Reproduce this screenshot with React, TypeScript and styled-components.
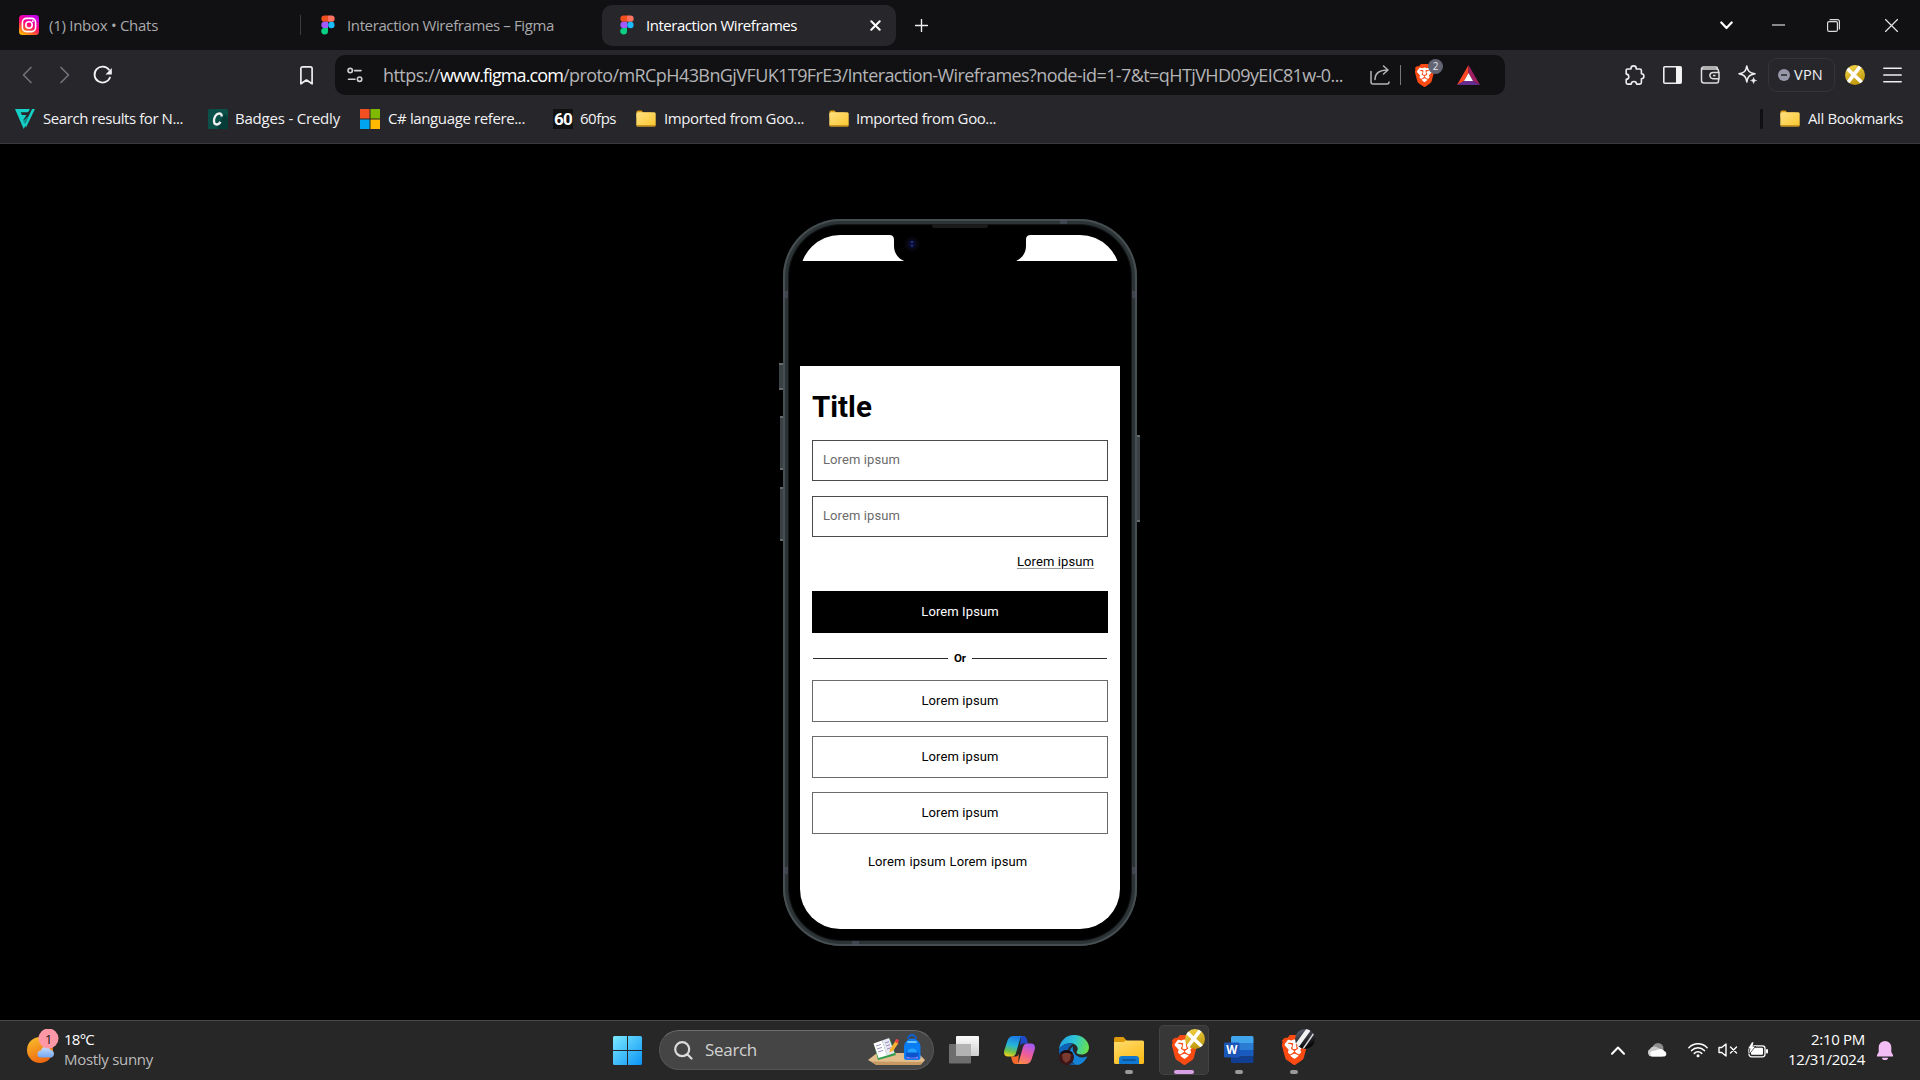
import React, { useLayoutEffect, useRef, useState } from 'react';
import styled, { createGlobalStyle, css } from 'styled-components';
import { SiBrave } from 'react-icons/si';

const GlobalStyle = createGlobalStyle`
  *, *::before, *::after { box-sizing: border-box; }
  body { margin: 0; background: #000; overflow: hidden; }
  svg { display: block; flex: none; }
`;

/* ---------- text that keeps a fixed measure ---------- */

const TextSpan = styled.span<{ $size: number; $color: string; $weight?: number; $family?: string }>`
  display: inline-block;
  flex: none;
  white-space: pre;
  font-family: ${p => p.$family ?? "'Open Sans'"}, 'Noto Sans', sans-serif;
  font-size: ${p => p.$size}px;
  font-weight: ${p => p.$weight ?? 400};
  line-height: 20px;
  color: ${p => p.$color};
`;

type LabelProps = {
  width: number;
  size?: number;
  color?: string;
  weight?: number;
  family?: string;
  children: React.ReactNode;
};

function Label({ width, size = 15, color = '#f2f2f4', weight, family, children }: LabelProps) {
  const ref = useRef<HTMLSpanElement>(null);
  const [spacing, setSpacing] = useState(0);
  useLayoutEffect(() => {
    const el = ref.current;
    if (!el) return;
    const count = (el.textContent ?? '').length;
    setSpacing((width - el.getBoundingClientRect().width) / Math.max(count, 1));
  }, [width]);
  return (
    <TextSpan ref={ref} $size={size} $color={color} $weight={weight} $family={family} style={{ letterSpacing: `${spacing}px` }}>
      {children}
    </TextSpan>
  );
}

/* ---------- shell ---------- */

const Desktop = styled.div`
  width: 1920px;
  height: 1080px;
  display: flex;
  flex-direction: column;
  background: #000;
  overflow: hidden;
`;

/* ---------- tab strip ---------- */

const TabStrip = styled.header`
  height: 50px;
  display: flex;
  align-items: center;
  background: #111113;
  flex: none;
`;

const Tab = styled.div<{ $width: number; $active?: boolean; $pad: number; $gap: number }>`
  width: ${p => p.$width}px;
  height: 41px;
  display: flex;
  align-items: center;
  gap: ${p => p.$gap}px;
  padding: 0 15px 0 ${p => p.$pad}px;
  border-radius: 10px;
  background: ${p => (p.$active ? '#27262b' : 'transparent')};
`;

const TabDivider = styled.i`
  width: 1px;
  height: 20px;
  background: #3d3c42;
`;

const Spacer = styled.div`
  flex: 1;
`;

const NewTab = styled.div`
  padding-left: 19px;
`;

const WindowControls = styled.div`
  display: grid;
  grid-template-columns: 52px 55px 58px 13px;
  align-items: center;
  padding-right: 22px;
`;

/* ---------- toolbar ---------- */

const Toolbar = styled.nav`
  height: 50px;
  display: flex;
  align-items: center;
  background: #27262b;
  flex: none;
`;

const NavButtons = styled.div`
  width: 300px;
  padding-left: 21px;
  display: grid;
  grid-template-columns: 38px 34px 20px;
  align-items: center;
`;

const AddressBar = styled.div`
  width: 1170px;
  height: 40px;
  margin-left: 22px;
  padding: 0 25px 0 12px;
  display: flex;
  align-items: center;
  border-radius: 10px;
  background: #111113;
`;

const Url = styled.div`
  margin-left: 20px;
  width: 987px;
  display: flex;
`;

const BarDivider = styled.i`
  width: 1px;
  height: 20px;
  margin: 0 14px 0 10px;
  background: #77767c;
`;

const ShieldButton = styled.div`
  position: relative;
  width: 42px;
`;

const CountBadge = styled.span`
  position: absolute;
  left: 13px;
  top: -5px;
  width: 15px;
  height: 15px;
  border-radius: 50%;
  background: #636474;
  color: #e6e6ea;
  font: 10px/15px 'Open Sans', sans-serif;
  text-align: center;
`;

const Actions = styled.div`
  display: flex;
  align-items: center;
  margin-left: 120px;
  gap: 18px;
`;

const VpnButton = styled.div`
  width: 67px;
  height: 34px;
  margin: 0 -8px;
  display: flex;
  align-items: center;
  gap: 4px;
  padding-left: 9px;
  border: 1px solid #35343a;
  border-radius: 9px;
`;

/* ---------- bookmarks ---------- */

const Bookmarks = styled.nav`
  height: 44px;
  display: flex;
  align-items: center;
  padding: 0 17px 6px 15px;
  background: #27262b;
  border-bottom: 1px solid #3a393f;
  flex: none;
`;

const Bookmark = styled.div<{ $after?: number; $gap?: number }>`
  display: flex;
  align-items: center;
  gap: ${p => p.$gap ?? 8}px;
  margin-right: ${p => p.$after ?? 0}px;
  ${TextSpan} { padding-bottom: 2px; }
`;

const BookmarkDivider = styled.i`
  width: 3px;
  height: 20px;
  margin-right: 17px;
  border-radius: 1px;
  background: #101013;
`;

const SixtyIcon = styled.div`
  width: 20px;
  height: 20px;
  background: #111;
  color: #fff;
  font: 700 17px/20px Roboto, sans-serif;
  letter-spacing: -0.8px;
  text-align: center;
`;

/* ---------- phone ---------- */

const Stage = styled.main`
  height: 876px;
  display: flex;
  justify-content: center;
  align-items: flex-start;
  padding-top: 75px;
  background: #000;
  flex: none;
`;

const Phone = styled.div`
  position: relative;
  width: 354px;
  height: 727px;
  padding: 16px 17px 17px;
  border-radius: 58px;
  background: #000;
  box-shadow: inset 0 0 0 2px #464e51, inset 0 0 0 5px #2c3336, inset 0 0 1px 6px #15191a;
`;

const SideKey = styled.i<{ $top: number; $height: number; $right?: boolean; $wide?: boolean }>`
  position: absolute;
  top: ${p => p.$top}px;
  height: ${p => p.$height}px;
  width: ${p => (p.$wide ? 4 : 3)}px;
  ${p => (p.$right ? css`right: -3px;` : css`left: ${p.$wide ? -4 : -3}px;`)}
  background: #3a4144;
  border-top: 2px solid #646b6d;
  border-bottom: 2px solid #646b6d;
`;

const Antenna = styled.i<{ $x: number; $y: number; $flat?: boolean }>`
  position: absolute;
  left: ${p => p.$x}px;
  top: ${p => p.$y}px;
  width: ${p => (p.$flat ? 7 : 5)}px;
  height: ${p => (p.$flat ? 5 : 7)}px;
  background: rgba(80, 82, 96, 0.6);
`;

const Screen = styled.div`
  width: 320px;
  height: 694px;
  display: flex;
  flex-direction: column;
  padding-top: 131px;
  border-radius: 40px;
  background: linear-gradient(#fff 26px, #000 26px, #000 131px, #fff 131px);
  overflow: hidden;
`;

const Notch = styled.svg`
  position: absolute;
  left: 104px;
  top: 0;
`;

const Form = styled.div`
  display: flex;
  flex-direction: column;
  padding: 23px 12px 0 12px;
`;

const Title = styled.h1`
  margin: 0;
  height: 50.5px;
  font: 700 29.5px/36px Roboto, sans-serif;
  color: #000;
`;

const fieldText = css`
  font: 400 13px/20px Roboto, sans-serif;
  letter-spacing: 0.1px;
`;

const Field = styled.div`
  ${fieldText}
  height: 41.5px;
  margin-bottom: 14.5px;
  padding: 9.5px 10px;
  border: 1px solid #4a4a4a;
  color: #6b6b6b;
`;

const ForgotLink = styled.a`
  ${fieldText}
  align-self: flex-end;
  margin: 0.5px 14px 19px 0;
  color: #000;
  text-decoration: underline;
  text-decoration-color: #999;
  text-underline-offset: 2px;
`;

const Button = styled.button<{ $primary?: boolean }>`
  ${fieldText}
  height: 41.5px;
  margin: 0 0 14.5px;
  padding: 0;
  border: 1px solid ${p => (p.$primary ? '#000' : '#6a6a6a')};
  background: ${p => (p.$primary ? '#000' : '#fff')};
  color: ${p => (p.$primary ? '#fff' : '#000')};
`;

const OrRow = styled.div`
  height: 20px;
  margin: 1px 1px 12px;
  display: flex;
  align-items: center;
  gap: 6px;
  font: 700 11.5px/20px Roboto, sans-serif;
  color: #000;
  &::before, &::after { content: ''; flex: 1; height: 1px; background: #2b2b2b; }
`;

const SignUp = styled.p`
  ${fieldText}
  margin: 4px 0 0 56px;
  color: #000;
  word-spacing: 0.6px;
`;

/* ---------- taskbar ---------- */

const Taskbar = styled.footer`
  height: 60px;
  display: flex;
  align-items: center;
  padding-bottom: 1px;
  background: #272727;
  border-top: 1px solid #484848;
  flex: none;
`;

const Weather = styled.div`
  width: 613px;
  display: flex;
  padding-left: 26px;
  gap: 3px;
`;

const Stack = styled.div<{ $end?: boolean }>`
  display: flex;
  flex-direction: column;
  align-items: ${p => (p.$end ? 'flex-end' : 'flex-start')};
  padding-bottom: 3px;
`;

const SearchBox = styled.div`
  width: 275px;
  height: 40px;
  margin: 0 15px 0 17px;
  padding: 0 8px 0 14px;
  display: flex;
  align-items: center;
  gap: 12px;
  border-radius: 20px;
  border: 1px solid #555;
  border-top-color: #6c6c6c;
  background: #454545;
`;

const Apps = styled.div`
  display: flex;
  align-items: center;
  gap: 5px;
  margin-left: -10px;
`;

const AppButton = styled.div<{ $state?: 'active' | 'open' }>`
  position: relative;
  width: 50px;
  height: 50px;
  display: grid;
  place-items: center;
  border-radius: 5px;
  ${p => p.$state === 'active' && css`background: #373737; box-shadow: inset 0 0 0 1px #434343;`}
  ${p => p.$state && css`
    &::after {
      content: '';
      position: absolute;
      bottom: 1px;
      left: ${p.$state === 'active' ? 15 : 21}px;
      width: ${p.$state === 'active' ? 20 : 8}px;
      height: 4px;
      border-radius: 2px;
      background: ${p.$state === 'active' ? '#d9a0e6' : '#9a9a9a'};
    }
  `}
`;

const Tray = styled.div`
  display: flex;
  align-items: center;
  padding-right: 27px;
`;

const TraySlot = styled.div<{ $after: number }>`
  margin-right: ${p => p.$after}px;
`;

/* ---------- icons ---------- */

const FigmaIcon = () => (
  <svg width="14" height="20" viewBox="0 0 14 20">
    <path d="M3.5 .5H7v6.3H3.5a3.15 3.15 0 0 1 0-6.3z" fill="#f24e1e" />
    <path d="M7 .5h3.5a3.15 3.15 0 0 1 0 6.3H7z" fill="#ff7262" />
    <path d="M3.5 6.8H7v6.3H3.5a3.15 3.15 0 0 1 0-6.3z" fill="#a259ff" />
    <circle cx="10.4" cy="9.95" r="3.2" fill="#1abcfe" />
    <path d="M3.5 13.1H7v3.2a3.4 3.2 0 1 1-3.5-3.2z" fill="#0acf83" />
  </svg>
);

const InstagramIcon = () => (
  <svg width="20" height="20" viewBox="0 0 20 20">
    <defs>
      <linearGradient id="ig" x1="0.1" y1="1" x2="0.6" y2="0">
        <stop offset="0" stopColor="#ffc800" />
        <stop offset=".3" stopColor="#ff5a2c" />
        <stop offset=".6" stopColor="#ff0080" />
        <stop offset="1" stopColor="#c800e8" />
      </linearGradient>
    </defs>
    <rect width="20" height="20" rx="3.5" fill="url(#ig)" />
    <g fill="none" stroke="#fff" strokeWidth="1.6">
      <rect x="3.4" y="3.4" width="13.2" height="13.2" rx="4" />
      <circle cx="10" cy="10" r="3.2" />
    </g>
    <circle cx="13.8" cy="6.2" r=".9" fill="#fff" />
  </svg>
);

const FolderIcon = () => (
  <svg width="20" height="17" viewBox="0 0 20 17">
    <defs>
      <linearGradient id="fold" x1="0" y1="0" x2="1" y2="1">
        <stop offset="0" stopColor="#ffe183" />
        <stop offset="1" stopColor="#fbc62f" />
      </linearGradient>
    </defs>
    <path d="M.5 2a1.6 1.6 0 0 1 1.6-1.6h3.4L7.300 2.500h8v5H.5z" fill="#dfa011" />
    <rect x=".3" y="2.300" width="19.400" height="13.800" rx="1.500" fill="url(#fold)" />
    <path d="M.4 15h19.2v.2a1.5 1.500 0 0 1-1.500 1.500H1.900A1.500 1.500 0 0 1 .4 15.200z" fill="#c99522" />
  </svg>
);

const BraveIcon = ({ w, h }: { w: number; h: number }) => (
  <svg width={w} height={h} viewBox="2 0 20 24" preserveAspectRatio="none">
    <path d="M6.500 3h11l3 5-3.500 12H7L3.500 8z" fill="#fff" />
    <SiBrave x="0" y="0" size="24" color="#fb4a12" />
  </svg>
);

const PuzzleIcon = () => (
  <svg width="20" height="20" viewBox="0 0 20 20" fill="none" stroke="#eee" strokeWidth="1.600" strokeLinejoin="round">
    <path d="M1.200 5.200a1.200 1.200 0 0 1 1.200-1.200H6V3.300a2.600 2.400 0 0 1 5.200 0V4h3.600a1.600 1.600 0 0 1 1.600 1.600v3.200a2.500 2.500 0 0 1 0 5v3.700a1.600 1.600 0 0 1-1.600 1.600h-3.300a2.600 2.600 0 0 0-5.200 0H2.500a1.300 1.300 0 0 1-1.300-1.300v-3.500a2.600 2.600 0 0 0 0-5.200z" />
  </svg>
);

const StripedAvatar = ({ kind, size }: { kind: 'gold' | 'dark'; size: number }) => (
  <svg width={size} height={size} viewBox="0 0 20 20">
    <defs>
      <clipPath id={`av-${kind}`}><circle cx="10" cy="10" r="10" /></clipPath>
      <linearGradient id={`avg-${kind}`} x1="0" y1="0" x2=".4" y2="1">
        <stop offset="0" stopColor={kind === 'gold' ? '#f6d94b' : '#65697a'} />
        <stop offset="1" stopColor={kind === 'gold' ? '#c29a10' : '#050506'} />
      </linearGradient>
    </defs>
    <g clipPath={`url(#av-${kind})`}>
      <rect width="20" height="20" fill={`url(#avg-${kind})`} />
      {kind === 'gold' ? (
        <path d="M2 3.500 17 17.500M15.500 1 2.500 18" stroke="#fff" strokeWidth="3.600" />
      ) : (
        <>
          <path d="M14 0 1 18" stroke="#f3f3f3" strokeWidth="4.500" />
          <path d="M19 4 8 20" stroke="#d8d8d8" strokeWidth="1.500" />
        </>
      )}
    </g>
  </svg>
);

const Overlay = styled.div<{ $x: number; $y: number }>`
  position: absolute;
  left: ${p => p.$x}px;
  top: ${p => p.$y}px;
`;

const Line = ({ w, h, d, c = '#eee', s = 1.5, box }: { w: number; h: number; d: string; c?: string; s?: number; box?: string }) => (
  <svg width={w} height={h} viewBox={box ?? `0 0 ${w} ${h}`} fill="none" stroke={c} strokeWidth={s} strokeLinecap="round" strokeLinejoin="round">
    <path d={d} />
  </svg>
);

const WeatherIcon = () => (
  <svg width="35" height="40" viewBox="0 1 35 40">
    <defs>
      <linearGradient id="sun" x1=".2" y1="0" x2=".6" y2="1">
        <stop offset="0" stopColor="#f8bc2c" />
        <stop offset="1" stopColor="#ee650e" />
      </linearGradient>
      <linearGradient id="cl" x1="0" y1="0" x2="0" y2="1">
        <stop offset="0" stopColor="#c7e0ff" />
        <stop offset="1" stopColor="#76a5ef" />
      </linearGradient>
    </defs>
    <circle cx="14" cy="22" r="13" fill="url(#sun)" />
    <path d="M15 29.500a3.500 3.500 0 0 1 0-7 5 5 0 0 1 9.500-.5 3.900 3.900 0 0 1 1 7.500z" fill="url(#cl)" />
    <circle cx="22.500" cy="10.500" r="10" fill="#ff98a6" />
    <text x="22.500" y="15.500" fontSize="13.500" textAnchor="middle" fontFamily="Open Sans, sans-serif" fill="#222">1</text>
  </svg>
);

const WindowsLogo = () => (
  <svg width="29" height="29" viewBox="0 0 29 29">
    <defs>
      <linearGradient id="win" x1="0" y1="0" x2="1" y2="1" >
        <stop offset="0" stopColor="#7cebff" />
        <stop offset="1" stopColor="#0a93f5" />
      </linearGradient>
    </defs>
    <path d="M1.500 0H14v14H0V1.500A1.500 1.500 0 0 1 1.500 0zM15 0h12.500A1.500 1.500 0 0 1 29 1.500V14H15zM0 15h14v14H1.500A1.500 1.500 0 0 1 0 27.500zM15 15h14v12.500a1.500 1.500 0 0 1-1.500 1.500H15z" fill="url(#win)" />
  </svg>
);

const SchoolArt = () => (
  <svg width="57" height="32" viewBox="0 0 57 32">
    <path d="M0 26 9 19h41l7 7-4 4.500H8z" fill="#e3bd8c" />
    <path d="M3 27.500 8 31h44l3-3z" fill="#c79a63" />
    <path d="M6 10 22 5l6 16-18 5z" fill="#2f9e4a" />
    <path d="M5.500 9.500 14 6.500l5 15L10.500 24z" fill="#fff" />
    <path d="m14 6.500 7-2.500 5.500 15-7.500 2.500z" fill="#e9e6f4" />
    <path d="m8 12 5-1.600M9 15l5-1.600M10 18l5-1.600M17 9l4-1.300M18 12l4-1.300M19 15l4-1.300" stroke="#8b86b5" strokeWidth=".9" />
    <path d="m22 15 5.500-8 3 2-5.500 8-3.500 1.500z" fill="#f9b233" />
    <path d="m26.500 7.500 1.500-2.300c.8-1 3.500.8 2.700 2L29.400 9.500z" fill="#ee4444" />
    <path d="M40 5a4 4 0 0 1 8 0" fill="none" stroke="#0b62d6" strokeWidth="1.800" />
    <path d="M36 12a8.300 8.300 0 0 1 16.500 0v11.500a2.500 2.500 0 0 1-2.500 2.500H38.500a2.500 2.500 0 0 1-2.500-2.500z" fill="#0a7cf4" />
    <path d="M40 8h8" stroke="#6ec3ff" strokeWidth="1.800" strokeLinecap="round" />
    <path d="M38 20.500a6.200 6.200 0 0 1 12.500 0V25H38z" fill="#0b55cf" />
    <path d="M39 18.500a5.400 5.400 0 0 1 10.500 0z" fill="#22a2ff" />
    <path d="M38.500 22.500c4 1.600 8 1.600 11.500 0v2H38.500z" fill="#9b82f5" />
  </svg>
);

const TaskViewIcon = () => (
  <svg width="30" height="28" viewBox="0 0 30 28">
    <defs>
      <linearGradient id="tv" x1="0" y1="0" x2="0" y2="1">
        <stop offset="0" stopColor="#fbfbfb" />
        <stop offset="1" stopColor="#cfcfcf" />
      </linearGradient>
    </defs>
    <rect x="7" y="0" width="23" height="20" rx="1" fill="url(#tv)" />
    <rect x="0" y="8" width="22" height="19.500" rx="1" fill="#7b7b7b" opacity=".85" />
    <rect x="7" y="8" width="15" height="12" fill="#b2b2b2" />
  </svg>
);

const CopilotIcon = () => (
  <svg width="31" height="28" viewBox="0 0 31 28">
    <defs>
      <linearGradient id="cp1" x1=".5" y1="0" x2=".3" y2="1">
        <stop offset="0" stopColor="#1a7be8" />
        <stop offset=".45" stopColor="#27b4d8" />
        <stop offset=".75" stopColor="#6cc24a" />
        <stop offset="1" stopColor="#f3cf1d" />
      </linearGradient>
      <linearGradient id="cp2" x1=".7" y1="0" x2=".3" y2="1">
        <stop offset="0" stopColor="#a259f5" />
        <stop offset=".5" stopColor="#ee5c9c" />
        <stop offset="1" stopColor="#ff8a4a" />
      </linearGradient>
    </defs>
    <path d="M17 0h2.500c2 0 2.800 1.500 3.300 3l1.200 4.500h-4.500c-2 0-3 1-3.500 3z" fill="#1e49c8" />
    <path d="M14 28h-2.500c-2 0-2.800-1.500-3.300-3L7 20.500h4.500c2 0 3-1 3.500-3z" fill="#f2682d" />
    <path d="M9.500 0H19c-1.700 0-2.500 1.200-3 3l-4 14c-.7 2.300-2 3.500-4 3.500H4C.8 20.500-.6 18 .3 14.500L3.500 4.500C4.500 1.500 6.500 0 9.500 0z" fill="url(#cp1)" />
    <path d="M21.500 28H12c1.700 0 2.500-1.200 3-3l4-14c.7-2.300 2-3.500 4-3.500h4c3.200 0 4.600 2.500 3.700 6l-3.200 10c-1 3-3 4.500-6 4.500z" fill="url(#cp2)" />
  </svg>
);

const EdgeIcon = () => (
  <svg width="30" height="30" viewBox="0 0 30 30">
    <defs>
      <linearGradient id="ed1" x1="0" y1=".3" x2="1" y2=".5">
        <stop offset="0" stopColor="#1f9fe6" />
        <stop offset=".5" stopColor="#2fc6d4" />
        <stop offset="1" stopColor="#66e04c" />
      </linearGradient>
    </defs>
    <path d="M0 15C.5 6 7 0 15 0c9 0 15 6.500 15 12.500 0 4.500-3.500 7-7.500 7-3.500 0-5-1.200-5-2.200 0-.8 1.200-1.300 1.200-3.500 0-3-3-5.600-7.200-5.600C6 8.200 1.500 11 0 15z" fill="url(#ed1)" />
    <path d="M0 15c1.500-4 5.500-6.500 10-6.500 2.500 0 4 .5 4 .5-4 2-6 5.500-6 10 0 6 5.500 10.500 10 10.800-1 .2-2 .2-3 .2C6.500 30 0 23.500 0 15z" fill="#0c63b8" />
    <path d="M10.500 18c0-3 1.500-5.500 3.500-6.500-1 4 2 11 9.500 11 2.200 0 4-.8 4.800-1.200C26 27 21.500 30 18 30c-4.500-1-7.500-6.500-7.500-12z" fill="#1583d8" />
    <circle cx="7.500" cy="22.500" r="7.500" fill="#3a1618" />
    <path d="M3 20c2-3 7-3 9 0l-1 5-4 3-3-3z" fill="#7a3a30" />
    <path d="M1 19c2-5 11-5 13 0-4-2-9-2-13 0z" fill="#120a10" />
  </svg>
);

const ExplorerIcon = () => (
  <svg width="30" height="27" viewBox="0 0 30 27">
    <defs>
      <linearGradient id="ex" x1="0" y1="0" x2=".6" y2="1">
        <stop offset="0" stopColor="#ffdc6e" />
        <stop offset="1" stopColor="#fbbd1c" />
      </linearGradient>
    </defs>
    <path d="M0 1.500A1.500 1.500 0 0 1 1.500 0h8L13 4v5H0z" fill="#dc9a0a" />
    <path d="M0 5h9.500l2.500-1.500h16.500A1.500 1.500 0 0 1 30 5v20.500a1.500 1.500 0 0 1-1.500 1.500h-27A1.500 1.500 0 0 1 0 25.500z" fill="url(#ex)" />
    <path d="M5 27v-5a3 3 0 0 1 3-3h14a3 3 0 0 1 3 3v5z" fill="#1178cf" />
    <path d="M9 23h12" stroke="#0a4e91" strokeWidth="1.500" strokeLinecap="round" />
  </svg>
);

const WordIcon = () => (
  <svg width="30" height="28" viewBox="0 0 30 28">
    <path d="M8.500 0H28a1.500 1.500 0 0 1 1.500 1.500V7H7V1.500A1.500 1.500 0 0 1 8.500 0z" fill="#41a5ee" />
    <path d="M7 7h22.500v7H7z" fill="#2b7cd3" />
    <path d="M7 14h22.500v6.500H7z" fill="#185abd" />
    <path d="M7 20.500h22.500v5A1.500 1.500 0 0 1 28 27H8.500A1.500 1.500 0 0 1 7 25.500z" fill="#103f91" />
    <rect x="0" y="6.500" width="15.500" height="15" rx="1.300" fill="#1a55b8" />
    <text x="7.800" y="18.200" textAnchor="middle" fontFamily="Open Sans, sans-serif" fontWeight="700" fontSize="11.500" fill="#fff">W</text>
  </svg>
);

const TrayCloud = () => (
  <svg width="20" height="14" viewBox="0 0 20 14">
    <circle cx="10" cy="5.500" r="5.500" fill="#8c8c8c" />
    <path d="M3.500 13.500a4 4 0 0 1-1.500-7.500 5 5 0 0 1 7.500-1.500L18 9l-4 4.500z" fill="#c9c9c9" />
    <path d="M4 13.500a3 3 0 0 1 0-5.500c2 0 5-1 8-2 3 0 4 1.500 4.500 2.500a2.600 2.600 0 0 1 0 5z" fill="#fff" />
  </svg>
);

const WifiIcon = () => (
  <svg width="20" height="16" viewBox="0 0 20 16" fill="none" stroke="#fff" strokeWidth="1.500" strokeLinecap="round">
    <path d="M.9 5.800a12.500 12.500 0 0 1 18.200 0M3.600 8.600a8.800 8.800 0 0 1 12.800 0M6.300 11.400a5.200 5.200 0 0 1 7.400 0" />
    <circle cx="10" cy="13.800" r="1.500" fill="#fff" stroke="none" />
  </svg>
);

const BatteryIcon = () => (
  <svg width="20" height="16" viewBox="0 0 20 16">
    <rect x="1" y="3.800" width="16" height="11" rx="2.500" fill="none" stroke="#fff" strokeWidth="1.300" />
    <rect x="3" y="5.800" width="12" height="7" rx="1" fill="#fff" />
    <rect x="18" y="7" width="2" height="4.500" rx="1" fill="#fff" />
    <path d="M4 .3.3 6.500H2.500L1 12l6-7.500H4.500L5.500.3z" fill="#fff" stroke="#272727" strokeWidth="1.200" paintOrder="stroke" />
  </svg>
);

const BellIcon = () => (
  <svg width="16" height="19" viewBox="0 0 16 19">
    <path d="M8 0a6.300 6.300 0 0 1 6.300 6.300V11L16 14v1.500H0V14l1.700-3V6.300A6.300 6.300 0 0 1 8 0zM5 16.700h6a3 2.300 0 0 1-6 0z" fill="#f2bdf5" />
  </svg>
);

/* ---------- page ---------- */

export default function App() {
  return (
    <Desktop>
      <GlobalStyle />

      <TabStrip>
        <Tab $width={300} $pad={19} $gap={10}>
          <InstagramIcon />
          <Label width={109} color="#a9a9ac">(1) Inbox • Chats</Label>
        </Tab>
        <TabDivider />
        <Tab $width={301} $pad={20} $gap={12}>
          <FigmaIcon />
          <Label width={207} color="#a9a9ac">Interaction Wireframes – Figma</Label>
        </Tab>
        <Tab $width={294} $pad={18} $gap={12} $active>
          <FigmaIcon />
          <Label width={151} color="#fff">Interaction Wireframes</Label>
          <Spacer />
          <Line w={11} h={11} s={2} c="#fff" d="M1.300 1.300 9.700 9.700M9.700 1.300 1.300 9.700" />
        </Tab>
        <NewTab>
          <Line w={13} h={13} s={1.400} d="M6.500.5v12M.5 6.500h12" />
        </NewTab>
        <Spacer />
        <WindowControls>
          <Line w={13} h={9} s={2.200} c="#fff" d="M1.300 1.500 6.500 7l5.200-5.500" />
          <Line w={13} h={13} s={1.200} c="#fff" d="M.5 6h12" />
          <svg width="13" height="13" viewBox="0 0 13 13" fill="none" stroke="#ddd" strokeWidth="1.200">
            <rect x=".6" y="2.600" width="9.800" height="9.800" rx="1.500" />
            <path d="M2.600.6h7.800a2 2 0 0 1 2 2v7.800" />
          </svg>
          <Line w={13} h={13} s={1.200} c="#e4e4e4" d="M.5.5l12 12M12.500.5l-12 12" />
        </WindowControls>
      </TabStrip>

      <Toolbar>
        <NavButtons>
          <Line w={12} h={18} c="#727177" s={1.700} d="M10 1.500 2.500 9l7.500 7.500" />
          <Line w={12} h={18} c="#727177" s={1.700} d="M2 1.500 9.500 9 2 16.500" />
          <svg width="20" height="20" viewBox="0 0 20 20">
            <path d="M17 12.500A8 8 0 1 1 16 4.800" fill="none" stroke="#f2f2f2" strokeWidth="1.800" strokeLinecap="round" />
            <path d="M18.800 3v6.500h-6.300z" fill="#f2f2f2" />
          </svg>
        </NavButtons>
        <Line w={13} h={19} s={1.700} d="M.9 17.800V2.600C.9 1.500 1.600.9 2.600.9h7.800c1 0 1.700.6 1.700 1.700v15.200L6.500 14z" />
        <AddressBar>
          <svg width="16" height="16" viewBox="0 0 16 16" fill="none" stroke="#d0d0d2" strokeWidth="1.600" strokeLinecap="round">
            <circle cx="3.200" cy="3.600" r="2.200" />
            <path d="M7.500 3.600h6.500M1.500 12.200h6.500" />
            <circle cx="12.600" cy="12.200" r="2.200" />
          </svg>
          <Url>
            <Label width={57} size={18} color="#b4b4b7">https://</Label>
            <Label width={123} size={18} color="#fff">www.figma.com</Label>
            <Label width={780} size={18} color="#b4b4b7">
              /proto/mRCpH43BnGjVFUK1T9FrE3/Interaction-Wireframes?node-id=1-7&amp;t=qHTjVHD09yEIC81w-0...
            </Label>
          </Url>
          <Line w={20} h={20} c="#b5b5b8" s={1.500} d="M1 6.500v10.500a2 2 0 0 0 2 2h14a2 2 0 0 0 2-2M5 14.500c0-6 4-9.500 13-9.500M13.500 1 18 5l-4.500 4" />
          <BarDivider />
          <ShieldButton>
            <BraveIcon w={19} h={23} />
            <CountBadge>2</CountBadge>
          </ShieldButton>
          <svg width="23" height="20" viewBox="0 0 23 20">
            <path d="M11.500 0 0 20l7-4 4.500-8z" fill="#ff4724" />
            <path d="M11.500 0 23 20l-7-4-4.500-8z" fill="#9e1f63" />
            <path d="M0 20h23l-7-4H7z" fill="#662d91" />
            <path d="M11.500 8 16 16H7z" fill="#fff" />
          </svg>
        </AddressBar>
        <Actions>
          <PuzzleIcon />
          <svg width="19" height="18" viewBox="0 0 19 18">
            <rect x=".8" y=".8" width="17.400" height="16.400" rx="1" fill="none" stroke="#eee" strokeWidth="1.600" />
            <path d="M13 1h5v16h-5z" fill="#f4f4f4" />
          </svg>
          <svg width="20" height="18" viewBox="0 0 20 18" fill="none" stroke="#ddd" strokeWidth="1.500">
            <path d="M18.500 6V5a2 2 0 0 0-2-2H1.500v11.500a2.500 2.500 0 0 0 2.500 2.500h12.500a2 2 0 0 0 2-2v-2M1.500 5V3a2 2 0 0 1 2-2H16a1.500 1.500 0 0 1 1.500 1.500" />
            <path d="M19 6.500h-6a3 3 0 0 0 0 6.200h6z" />
            <path d="M13 9.600h2.500" />
          </svg>
          <svg width="20" height="20" viewBox="0 0 20 20" fill="none" stroke="#eee" strokeWidth="1.500" strokeLinejoin="round">
            <path d="M8.800 1C9.800 6.300 11.300 7.900 17 8.800 11.300 9.800 9.800 11.300 8.800 17 7.900 11.300 6.300 9.800 1 8.800 6.300 7.900 7.900 6.300 8.800 1z" />
            <path d="M15.600 12.500c.4 2 1 2.600 3 3-2 .4-2.600 1-3 3-.4-2-1-2.600-3-3 2-.4 2.600-1 3-3z" fill="#eee" strokeWidth=".6" />
          </svg>
          <VpnButton>
            <svg width="12" height="12" viewBox="0 0 12 12">
              <circle cx="6" cy="6" r="6" fill="#9797aa" />
              <path d="M3 6h6" stroke="#27262b" strokeWidth="1.500" />
            </svg>
            <Label width={29} size={14.500}>VPN</Label>
          </VpnButton>
          <StripedAvatar kind="gold" size={20} />
          <Line w={19} h={16} s={1.500} d="M.8 1.200h17.400M.8 8h17.400M.8 14.800h17.400" />
        </Actions>
      </Toolbar>

      <Bookmarks>
        <Bookmark $after={25}>
          <svg width="20" height="20" viewBox="0 0 20 20" fill="#14d0c6">
            <path d="M0 0h15l-2 3.300H5.700l1.200 2.600h4.600L8.300 11l3 4-2.600 5z" />
            <path d="M17 0h3l-9 18.500-1.200-3z" />
            <path d="M14 6.500 9.500 15 8 12z" fill="#0d9b96" />
          </svg>
          <Label width={140}>Search results for N...</Label>
        </Bookmark>
        <Bookmark $after={20} $gap={7}>
          <svg width="20" height="20" viewBox="0 0 20 20">
            <rect width="20" height="20" rx="1.500" fill="#0a5049" />
            <path d="m9 17 8-12 3 4v9.500a1.500 1.500 0 0 1-1.500 1.500H10z" fill="#053c38" />
            <path d="M13.600 7.500c.2-2-.6-3-2.300-3C8 4.500 6 8.500 6 12c0 2.300 1 3.500 2.700 3.500 1.800 0 3-1 3.700-2.700" fill="none" stroke="#eee" strokeWidth="2.300" />
          </svg>
          <Label width={105}>Badges - Credly</Label>
        </Bookmark>
        <Bookmark $after={28}>
          <svg width="20" height="20" viewBox="0 0 20 20">
            <path d="M0 0h9.500v9.500H0z" fill="#f25022" />
            <path d="M10.500 0H20v9.500h-9.500z" fill="#7fba00" />
            <path d="M0 10.500h9.500V20H0z" fill="#00a4ef" />
            <path d="M10.500 10.500H20V20h-9.500z" fill="#ffb900" />
          </svg>
          <Label width={137}>C# language refere...</Label>
        </Bookmark>
        <Bookmark $after={20} $gap={7}>
          <SixtyIcon>60</SixtyIcon>
          <Label width={36}>60fps</Label>
        </Bookmark>
        <Bookmark $after={25}>
          <FolderIcon />
          <Label width={140}>Imported from Goo...</Label>
        </Bookmark>
        <Bookmark $gap={7}>
          <FolderIcon />
          <Label width={140}>Imported from Goo...</Label>
        </Bookmark>
        <Spacer />
        <BookmarkDivider />
        <Bookmark>
          <FolderIcon />
          <Label width={95}>All Bookmarks</Label>
        </Bookmark>
      </Bookmarks>

      <Stage>
        <Phone>
          <SideKey $top={144} $height={27} $wide />
          <SideKey $top={197} $height={54} />
          <SideKey $top={268} $height={54} />
          <SideKey $top={216} $height={87} $right />
          <Antenna $x={0} $y={72} />
          <Antenna $x={349} $y={72} />
          <Antenna $x={0} $y={648} />
          <Antenna $x={349} $y={648} />
          <Antenna $x={277} $y={0} $flat />
          <Antenna $x={69} $y={722} $flat />
          <Screen>
            <Form>
              <Title>Title</Title>
              <Field>Lorem ipsum</Field>
              <Field>Lorem ipsum</Field>
              <ForgotLink>Lorem ipsum</ForgotLink>
              <Button $primary>Lorem Ipsum</Button>
              <OrRow>Or</OrRow>
              <Button>Lorem ipsum</Button>
              <Button>Lorem ipsum</Button>
              <Button>Lorem ipsum</Button>
              <SignUp>Lorem ipsum Lorem ipsum</SignUp>
            </Form>
          </Screen>
          <Notch width="146" height="44" viewBox="0 0 146 44">
            <path d="M2 14v2c3 0 5 1 5 5v6c0 9 7 16 16 16h100c9 0 16-7 16-16v-6c0-4 2-5 5-5v-2z" fill="#000" />
            <rect x="45" y="5" width="56" height="4" rx="2" fill="#1a1a1a" />
            <circle cx="25" cy="25" r="7.500" fill="#06060c" />
            <circle cx="25" cy="25" r="4" fill="#0b0d30" />
            <circle cx="25" cy="23" r="1" fill="#2c3b9a" />
            <circle cx="25" cy="26.500" r="1" fill="#2c3b9a" />
          </Notch>
        </Phone>
      </Stage>

      <Taskbar>
        <Weather>
          <WeatherIcon />
          <Stack>
            <Label width={30} color="#fff">18°C</Label>
            <Label width={89} color="#bcbcbc">Mostly sunny</Label>
          </Stack>
        </Weather>
        <WindowsLogo />
        <SearchBox>
          <Line w={19} h={19} c="#dcdcdc" s={2.200} d="M13.300 13.300 17.500 17.500M15.200 8.200a7 7 0 1 1-14 0 7 7 0 0 1 14 0z" />
          <Label width={52} size={17} color="#d2d2d2">Search</Label>
          <Spacer />
          <SchoolArt />
        </SearchBox>
        <Apps>
          <AppButton><TaskViewIcon /></AppButton>
          <AppButton><CopilotIcon /></AppButton>
          <AppButton><EdgeIcon /></AppButton>
          <AppButton $state="open"><ExplorerIcon /></AppButton>
          <AppButton $state="active">
            <BraveIcon w={25} h={30} />
            <Overlay $x={26} $y={4}><StripedAvatar kind="gold" size={20} /></Overlay>
          </AppButton>
          <AppButton $state="open"><WordIcon /></AppButton>
          <AppButton $state="open">
            <BraveIcon w={25} h={30} />
            <Overlay $x={26} $y={4}><StripedAvatar kind="dark" size={20} /></Overlay>
          </AppButton>
        </Apps>
        <Spacer />
        <Tray>
          <TraySlot $after={23}><Line w={14} h={9} c="#fff" s={2} d="M1 7.700 7 1.500l6 6.200" /></TraySlot>
          <TraySlot $after={20}><TrayCloud /></TraySlot>
          <TraySlot $after={10}><WifiIcon /></TraySlot>
          <TraySlot $after={10}><Line w={20} h={14} c="#fff" s={1.400} d="M1 4.500h2.700L8 1v12L3.700 9.500H1zM12.500 4l6 6M18.500 4l-6 6" /></TraySlot>
          <TraySlot $after={20}><BatteryIcon /></TraySlot>
          <TraySlot $after={12}>
            <Stack $end>
              <Label width={54} color="#fff">2:10 PM</Label>
              <Label width={77} color="#fff">12/31/2024</Label>
            </Stack>
          </TraySlot>
          <BellIcon />
        </Tray>
      </Taskbar>
    </Desktop>
  );
}
